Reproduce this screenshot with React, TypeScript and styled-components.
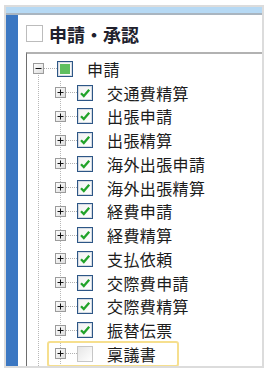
import React from 'react';
import styled, { createGlobalStyle, css } from 'styled-components';

const Global = createGlobalStyle`
  html, body { margin: 0; padding: 0; background: #fff; }
  body { font-family: "Noto Sans CJK JP", "Noto Sans", sans-serif; }
`;

const Frame = styled.div`
  margin: 5px 0 0 4px;
  width: 260px;
  height: 363px;
  box-sizing: border-box;
  border: 2px solid #dcdcdc;
  display: flex;
  flex-direction: column;
  overflow: hidden;
`;

const TopBar = styled.div`
  flex: none;
  height: 6px;
  background: #b6d9f4;
  border-bottom: 2px solid #a9b5c0;
`;

const Body = styled.div`
  flex: 1;
  display: flex;
  min-height: 0;
`;

const SideBar = styled.div`
  flex: none;
  width: 12px;
  background: #3b77c2;
`;

const Content = styled.div`
  flex: 1;
  display: flex;
  flex-direction: column;
  background: #fff;
  min-width: 0;
`;

const Header = styled.div`
  flex: none;
  height: 37px;
  display: flex;
  align-items: center;
  padding-left: 8px;
`;

const HeaderCheck = styled.span`
  width: 17px;
  height: 17px;
  box-sizing: border-box;
  border: 1px solid #bcbcbc;
  background: #fff;
  flex: none;
`;

const Title = styled.span`
  margin-left: 6px;
  font-size: 18px;
  font-weight: 700;
  color: #20202c;
  line-height: 1;
`;

const TreePanel = styled.div`
  flex: 1;
  margin-left: 8px;
  border-top: 2px solid #b2b2b2;
  border-left: 1px solid #6e6e6e;
  padding-top: 3px;
  display: flex;
  flex-direction: column;
  min-height: 0;
`;

const dotsY = `linear-gradient(#b8b8b8 50%, transparent 50%)`;

const ChildGroup = styled.div`
  flex: 1;
  display: flex;
  flex-direction: column;
  background-image: ${dotsY}, ${dotsY};
  background-size: 1px 2px, 1px 2px;
  background-position: 11px 0, 33px 0;
  background-repeat: repeat-y;
`;

const Row = styled.div<{ $root?: boolean }>`
  flex: none;
  height: 23.75px;
  display: flex;
  align-items: center;
  position: relative;
  ${(p) =>
    p.$root &&
    css`
      &::after {
        content: '';
        position: absolute;
        left: 11px;
        top: 50%;
        bottom: 0;
        width: 1px;
        background-image: ${dotsY};
        background-size: 1px 2px;
      }
    `}
`;

const RowInner = styled.div<{ $level: number; $highlight?: boolean }>`
  height: 100%;
  display: flex;
  align-items: center;
  box-sizing: border-box;
  margin-left: ${(p) => (p.$level === 0 ? 0 : 21)}px;
  padding-left: ${(p) => (p.$level === 0 ? 6 : 7)}px;
  padding-right: 22px;
  border-radius: 2px;
  ${(p) =>
    p.$highlight &&
    css`
      outline: 2.5px solid #f6df8e;
      outline-offset: -1px;
    `}
`;

const Connector = styled.span<{ $w: number }>`
  flex: none;
  width: ${(p) => p.$w}px;
  height: 1px;
  background-image: linear-gradient(to right, #b0b0b0 50%, transparent 50%);
  background-size: 2px 1px;
  background-repeat: repeat-x;
`;

const Expander = styled.svg`
  flex: none;
  display: block;
  position: relative;
  z-index: 1;
`;

const Box = styled.span<{ $state: 'checked' | 'partial' | 'none' }>`
  flex: none;
  width: 16px;
  height: 16px;
  box-sizing: border-box;
  display: flex;
  align-items: center;
  justify-content: center;
  ${(p) =>
    p.$state === 'none'
      ? css`
          border: 1px solid #c6c6c6;
          background: linear-gradient(135deg, #e6e6e6, #ffffff);
        `
      : css`
          border: 1px solid #2d5686;
          box-shadow: inset 0 0 0 1px #d4dbe3;
          background: linear-gradient(135deg, #f1f1f1, #ffffff);
        `}
`;

const PartialFill = styled.span`
  width: 10px;
  height: 10px;
  background: #5fbf5f;
`;

const Label = styled.span<{ $level: number }>`
  margin-left: 14px;
  font-size: 16px;
  letter-spacing: 0.4px;
  color: #1c1c1c;
  line-height: 1;
  white-space: nowrap;
`;

const ExpanderIcon = ({ open }: { open: boolean }) => (
  <Expander width="11" height="11" viewBox="0 0 11 11">
    <defs>
      <linearGradient id="eg" x1="0" y1="0" x2="1" y2="1">
        <stop offset="0" stopColor="#ffffff" />
        <stop offset="1" stopColor="#dcdcdc" />
      </linearGradient>
    </defs>
    <rect x="0.5" y="0.5" width="10" height="10" fill="url(#eg)" stroke="#9c9c9c" />
    <rect x="2.5" y="5" width="6" height="1" fill="#111" />
    {!open && <rect x="5" y="2.5" width="1" height="6" fill="#111" />}
  </Expander>
);

const Check = () => (
  <svg width="12" height="12" viewBox="0 0 12 12">
    <path d="M2 6.2 L4.8 9 L10.2 2.8" fill="none" stroke="#21a32a" strokeWidth="2.3" />
  </svg>
);

const CheckBox = ({ state }: { state: 'checked' | 'partial' | 'none' }) => (
  <Box $state={state}>
    {state === 'checked' && <Check />}
    {state === 'partial' && <PartialFill />}
  </Box>
);

const items: { label: string; checked: boolean }[] = [
  { label: '交通費精算', checked: true },
  { label: '出張申請', checked: true },
  { label: '出張精算', checked: true },
  { label: '海外出張申請', checked: true },
  { label: '海外出張精算', checked: true },
  { label: '経費申請', checked: true },
  { label: '経費精算', checked: true },
  { label: '支払依頼', checked: true },
  { label: '交際費申請', checked: true },
  { label: '交際費精算', checked: true },
  { label: '振替伝票', checked: true },
  { label: '稟議書', checked: false },
];

export default function App() {
  return (
    <>
      <Global />
      <Frame>
        <TopBar />
        <Body>
          <SideBar />
          <Content>
            <Header>
              <HeaderCheck />
              <Title>申請・承認</Title>
            </Header>
            <TreePanel>
              <Row $root>
                <RowInner $level={0}>
                  <ExpanderIcon open />
                  <Connector $w={13} />
                  <CheckBox state="partial" />
                  <Label $level={0}>申請</Label>
                </RowInner>
              </Row>
              <ChildGroup>
                {items.map((it) => (
                  <Row key={it.label}>
                    <RowInner $level={1} $highlight={!it.checked}>
                      <ExpanderIcon open={false} />
                      <Connector $w={11} />
                      <CheckBox state={it.checked ? 'checked' : 'none'} />
                      <Label $level={1}>{it.label}</Label>
                    </RowInner>
                  </Row>
                ))}
              </ChildGroup>
            </TreePanel>
          </Content>
        </Body>
      </Frame>
    </>
  );
}
